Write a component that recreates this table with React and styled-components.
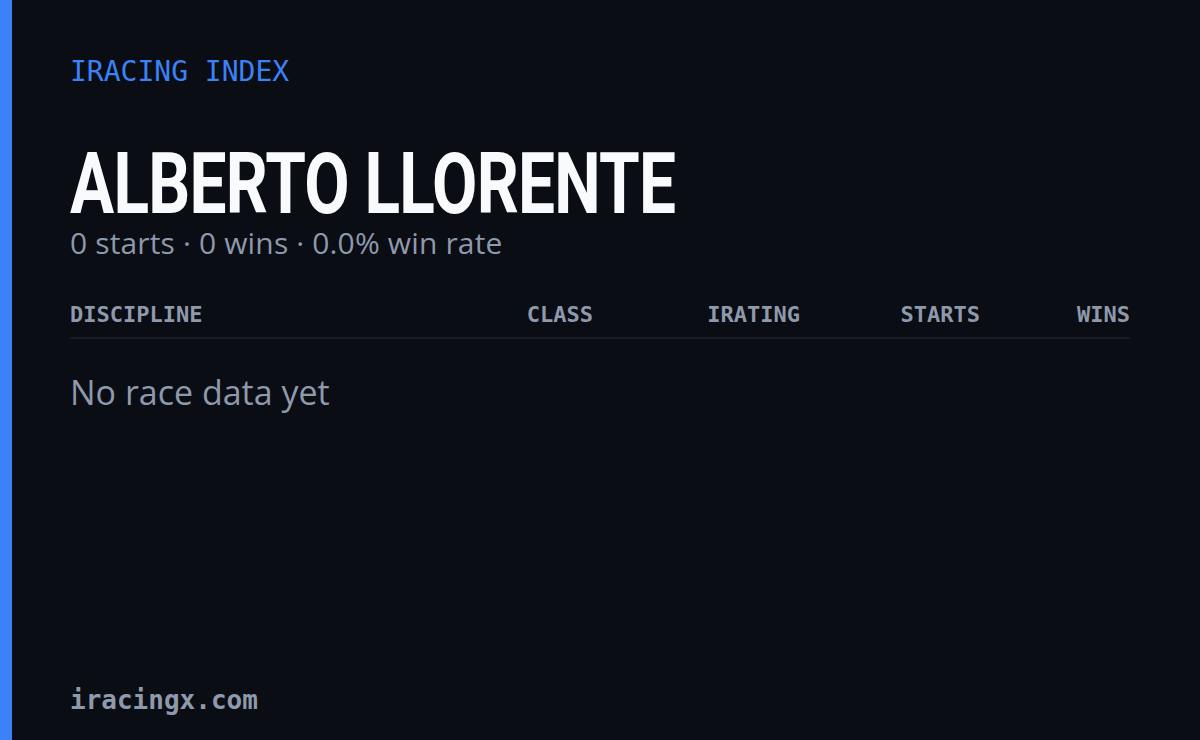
import styled, { createGlobalStyle } from "styled-components"

const Global = createGlobalStyle`
  html, body {
    margin: 0;
    padding: 0;
    background: #0a0d14;
  }
  #root {
    height: 740px;
  }
`

const columns = [
  { label: "DISCIPLINE" },
  { label: "CLASS" },
  { label: "IRATING" },
  { label: "STARTS" },
  { label: "WINS" },
]

export default function App() {
  return (
    <>
      <Global />
      <Card>
        <Accent />
        <Content>
          <Kicker>IRACING INDEX</Kicker>
          <Name>ALBERTO LLORENTE</Name>
          <Summary>0 starts · 0 wins · 0.0% win rate</Summary>
          <TableHead>
            {columns.map((c, i) => (
              <HeadCell key={c.label} $first={i === 0}>{c.label}</HeadCell>
            ))}
          </TableHead>
          <Empty>No race data yet</Empty>
          <Footer>iracingx.com</Footer>
        </Content>
      </Card>
    </>
  )
}

const Card = styled.div`
  width: 1200px;
  height: 740px;
  display: flex;
  background: #0a0d14;
  overflow: hidden;
`
const Accent = styled.div`
  width: 12px;
  flex-shrink: 0;
  background: #3b82f6;
`
const Content = styled.div`
  flex: 1;
  display: flex;
  flex-direction: column;
  align-items: flex-start;
  padding: 54px 70px 24px 58px;
`
const Kicker = styled.div`
  font-family: "DejaVu Sans Mono", "Liberation Mono", monospace;
  font-size: 28px;
  line-height: 36px;
  color: #3b82f6;
  font-weight: 500;
`
const Name = styled.h1`
  margin: 58px 0 0 0;
  font-family: Roboto, "Liberation Sans", sans-serif;
  font-weight: 700;
  font-size: 86px;
  line-height: 72px;
  color: #f8fafc;
  letter-spacing: -1px;
  white-space: nowrap;
  transform: scaleX(0.765);
  transform-origin: left center;
`
const Summary = styled.div`
  font-family: "Open Sans", sans-serif;
  font-size: 30px;
  line-height: 36px;
  letter-spacing: 0.15px;
  color: #8e99ab;
  margin-top: 5px;
`
const TableHead = styled.div`
  align-self: stretch;
  margin-top: 40px;
  display: grid;
  grid-template-columns: 1fr 160px 207px 180px 150px;
  padding-bottom: 8px;
  border-bottom: 2px solid #171b25;
`
const HeadCell = styled.div`
  font-family: "DejaVu Sans Mono", "Liberation Mono", monospace;
  font-size: 22px;
  line-height: 28px;
  font-weight: 700;
  color: #8e99ab;
  text-align: ${p => (p.$first ? "left" : "right")};
`
const Empty = styled.div`
  margin-top: 30px;
  font-family: "Open Sans", sans-serif;
  font-size: 34px;
  line-height: 46px;
  color: #8e99ab;
`
const Footer = styled.div`
  margin-top: auto;
  font-family: "DejaVu Sans Mono", "Liberation Mono", monospace;
  font-size: 26px;
  line-height: 32px;
  font-weight: 700;
  color: #8e99ab;
`
